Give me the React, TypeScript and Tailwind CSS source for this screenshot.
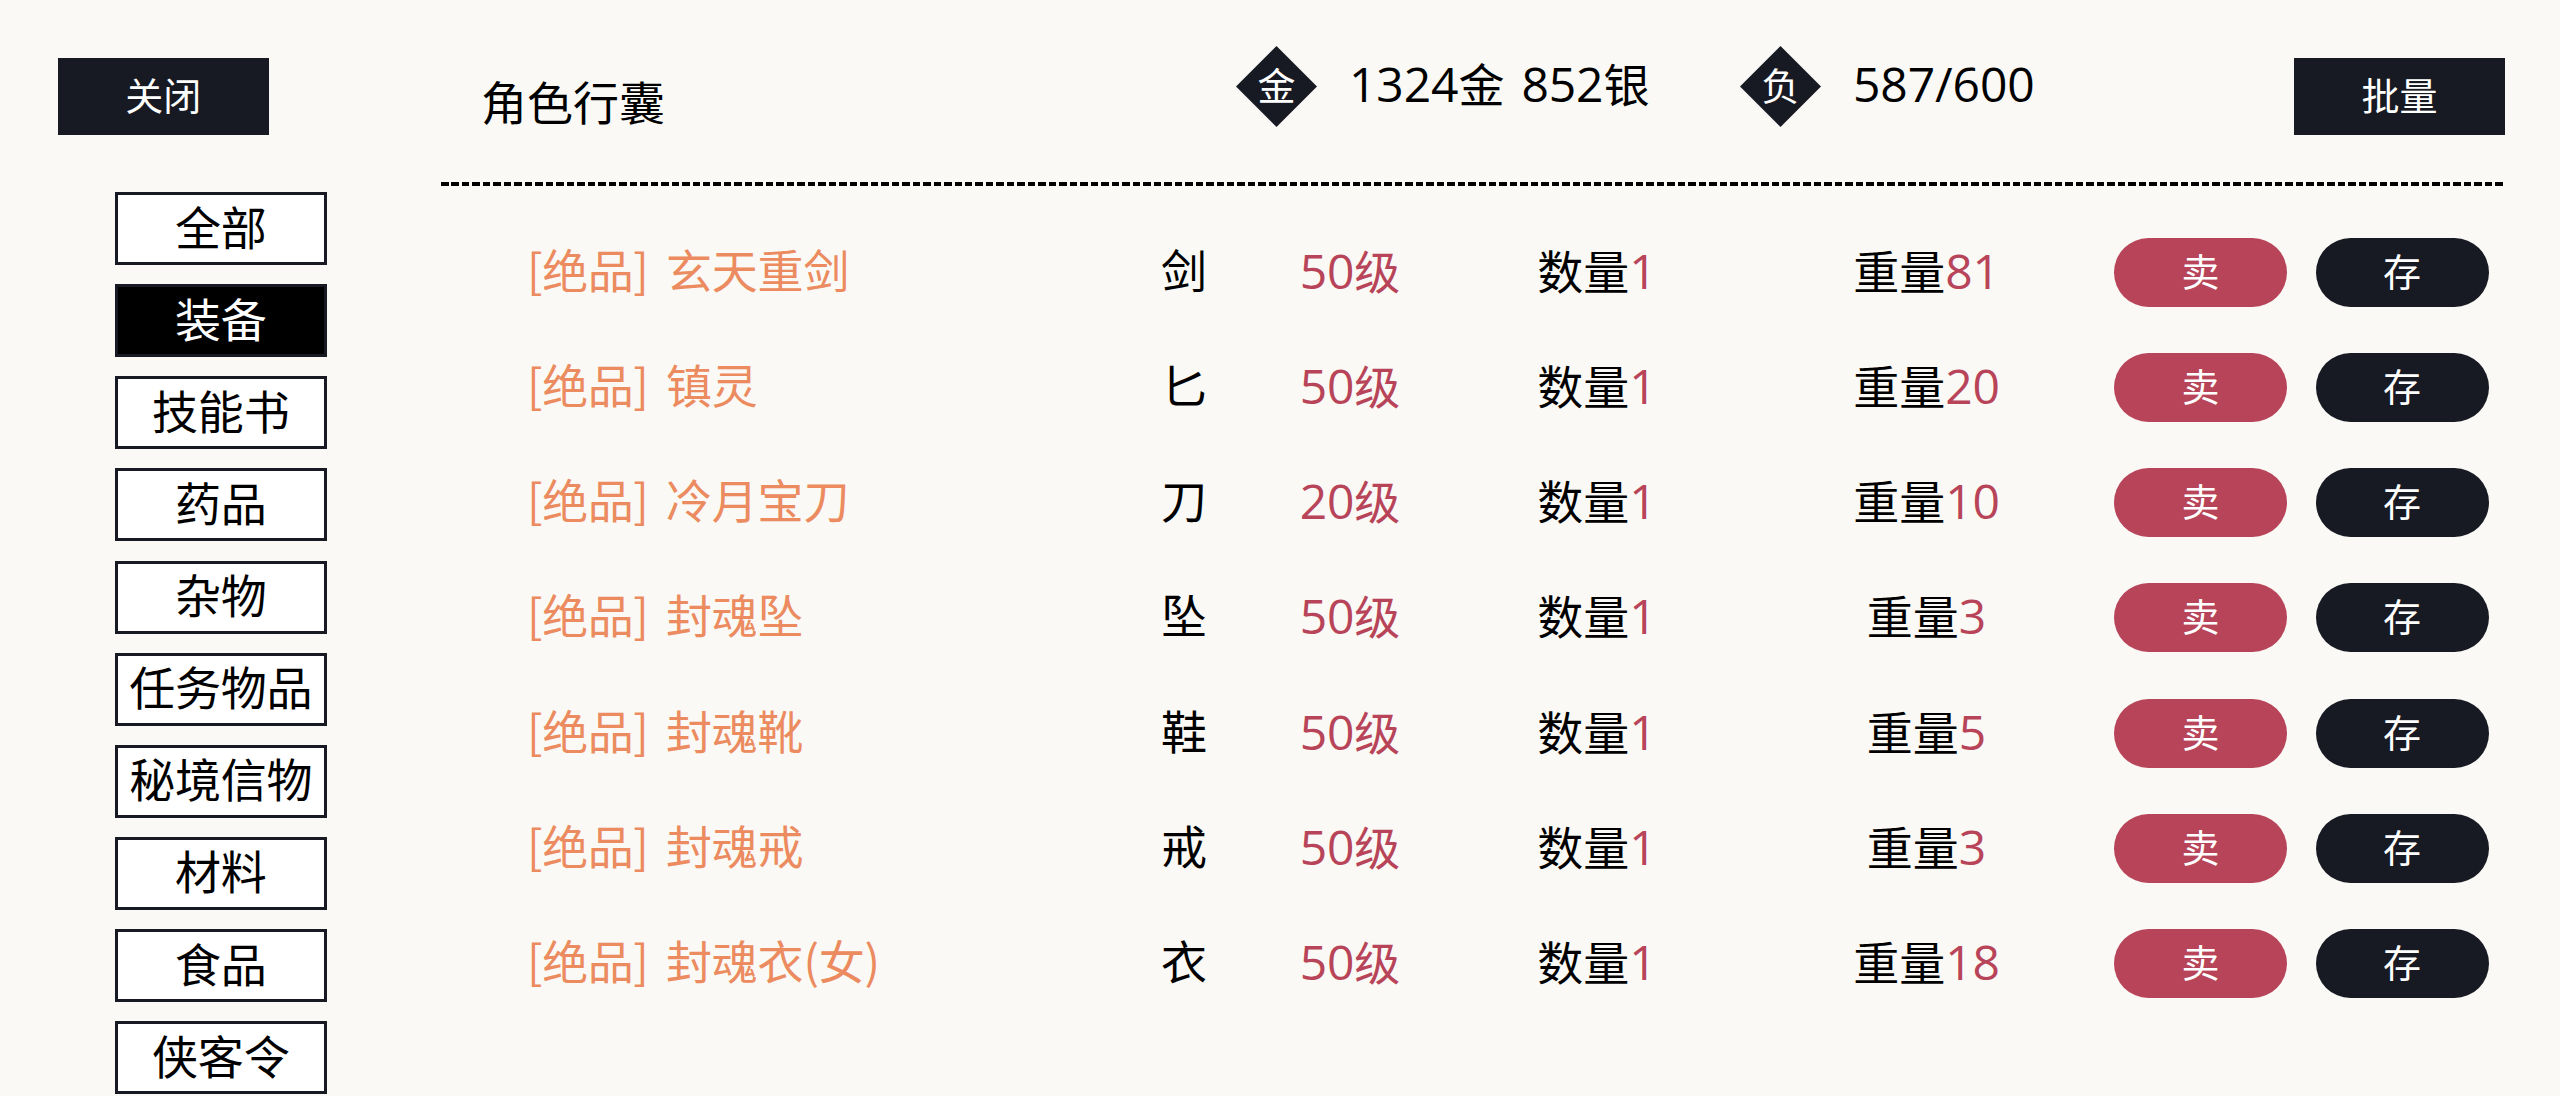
import { useState } from "react";
import clsx from "clsx";

type Item = {
  name: string;
  type: string;
  level: number;
  count: number;
  weight: number;
};

const categories = [
  "全部",
  "装备",
  "技能书",
  "药品",
  "杂物",
  "任务物品",
  "秘境信物",
  "材料",
  "食品",
  "侠客令",
];

const items: Item[] = [
  { name: "玄天重剑", type: "剑", level: 50, count: 1, weight: 81 },
  { name: "镇灵", type: "匕", level: 50, count: 1, weight: 20 },
  { name: "冷月宝刀", type: "刀", level: 20, count: 1, weight: 10 },
  { name: "封魂坠", type: "坠", level: 50, count: 1, weight: 3 },
  { name: "封魂靴", type: "鞋", level: 50, count: 1, weight: 5 },
  { name: "封魂戒", type: "戒", level: 50, count: 1, weight: 3 },
  { name: "封魂衣(女)", type: "衣", level: 50, count: 1, weight: 18 },
];

function Num({ children }: { children: React.ReactNode }) {
  return (
    <span className="font-['Open_Sans',sans-serif] text-[48px] leading-none tracking-[-0.1px]">
      {children}
    </span>
  );
}

function Badge({ label }: { label: string }) {
  return (
    <div className="grid place-items-center w-[81px] h-[81px] bg-[#171a23] text-white text-[38px] leading-none [clip-path:polygon(50%_0,100%_50%,50%_100%,0_50%)]">
      <span className="-mt-[6px]">{label}</span>
    </div>
  );
}

function ItemRow({ item }: { item: Item }) {
  return (
    <div className="grid grid-cols-[594px_126px_206px_288px_371px_175px_173px] items-center h-[69px] pl-[86px] text-center">
      <div className="flex -mt-[9px] text-left text-[#eb8b5f]">
        <span className="w-[139px] tracking-[-0.4px]">[绝品]</span>
        <span className="tracking-[-0.2px]">{item.name}</span>
      </div>
      <span className="-mt-[9px]">{item.type}</span>
      <span className="-mt-[4px] text-[#b84459]">
        <Num>{item.level}</Num>级
      </span>
      <span className="-mt-[4px]">
        数量
        <span className="text-[#b84459]">
          <Num>{item.count}</Num>
        </span>
      </span>
      <span className="-mt-[4px]">
        重量
        <span className="text-[#b84459]">
          <Num>{item.weight}</Num>
        </span>
      </span>
      <button className="w-[173px] h-[69px] pb-[5px] ml-[2px] rounded-full bg-[#b84459] text-white text-[38px] leading-none">
        卖
      </button>
      <button className="w-[173px] h-[69px] pb-[5px] ml-[28.5px] rounded-full bg-[#171a23] text-white text-[38px] leading-none">
        存
      </button>
    </div>
  );
}

function Stat({
  label,
  className,
  children,
}: {
  label: string;
  className: string;
  children: React.ReactNode;
}) {
  return (
    <div className={clsx("flex items-center gap-[32px] h-[81px] mt-[46px]", className)}>
      <Badge label={label} />
      <span className="-mt-[7px] whitespace-nowrap">{children}</span>
    </div>
  );
}

export default function App() {
  const [active, setActive] = useState("装备");

  return (
    <div className="flex w-[2560px] h-[1096px] overflow-hidden bg-[#faf9f5] text-black text-[46px] leading-none font-['Noto_Sans_CJK_SC',sans-serif]">
      {/* 左侧分类 */}
      <aside className="w-[441px] shrink-0 pt-[57.5px] pl-[57.5px]">
        <button className="block w-[211.5px] h-[77px] pb-[5px] bg-[#171a23] text-white text-[38px] leading-none">
          关闭
        </button>
        <nav className="flex flex-col gap-[19.15px] mt-[57.5px] ml-[57.5px]">
          {categories.map((c) => (
            <button
              key={c}
              onClick={() => setActive(c)}
              className={clsx(
                "w-[211.5px] h-[73px] shrink-0 pb-[8px] border-[3px] border-[#171a23] leading-none tracking-[-0.2px] whitespace-nowrap",
                c === active ? "bg-black text-white" : "bg-white"
              )}
            >
              {c}
            </button>
          ))}
        </nav>
      </aside>

      <main className="w-[2064px] shrink-0">
        {/* 顶部信息 */}
        <header className="flex items-start h-[182px] pl-[40px]">
          <h1 className="w-[755px] mt-[77px]">角色行囊</h1>
          <Stat label="金" className="w-[504px]">
            <Num>1324</Num>金<span className="inline-block w-[17px]" />
            <Num>852</Num>银
          </Stat>
          <Stat label="负" className="w-[554px]">
            <Num>587/600</Num>
          </Stat>
          <button className="w-[211px] h-[77px] mt-[57.5px] pb-[5px] bg-[#171a23] text-white text-[38px] leading-none">
            批量
          </button>
        </header>
        <div className="w-[2062px] h-[4px] bg-[repeating-linear-gradient(90deg,#000_0_7.5px,transparent_7.5px_10.48px)]" />

        {/* 物品列表 */}
        <div className="flex flex-col gap-[46.15px] mt-[52px]">
          {items.map((item) => (
            <ItemRow key={item.name} item={item} />
          ))}
        </div>
      </main>
    </div>
  );
}
